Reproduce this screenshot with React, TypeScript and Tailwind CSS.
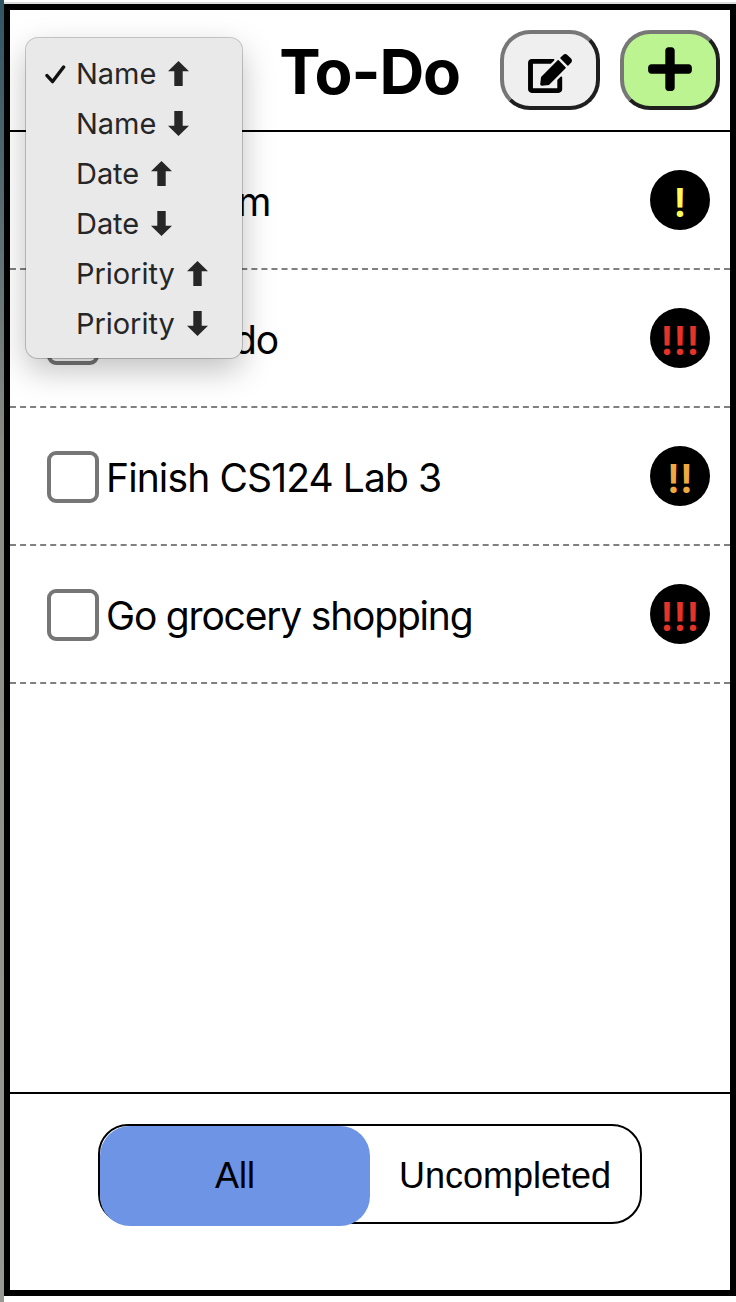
import { FaPlus, FaEdit } from "react-icons/fa";

type Task = { name: string; priority: 1 | 2 | 3; tracking: string };

const tasks: Task[] = [
  { name: "Call mom", priority: 1, tracking: "tracking-[-0.95px]" },
  { name: "Feed Fido", priority: 3, tracking: "tracking-[-1.05px]" },
  { name: "Finish CS124 Lab 3", priority: 2, tracking: "tracking-[-0.88px]" },
  { name: "Go grocery shopping", priority: 3, tracking: "tracking-[-1.2px]" },
];

const priorityColor = {
  1: "text-[#fffb54]",
  2: "text-[#f0a940]",
  3: "text-[#e63327]",
};

const sortOptions = [
  { label: "Name", up: true },
  { label: "Name", up: false },
  { label: "Date", up: true },
  { label: "Date", up: false },
  { label: "Priority", up: true },
  { label: "Priority", up: false },
];

function Arrow({ up }: { up: boolean }) {
  return (
    <svg
      viewBox="0 0 20 25"
      className={up ? "mb-[2px] ml-[12px] h-[25px] w-[21px]" : "mb-px ml-[12px] h-[25px] w-[21px] rotate-180"}
      fill="currentColor"
      preserveAspectRatio="none"
    >
      <path d="M10 0 20 10.3H14V25H6V10.3H0Z" />
    </svg>
  );
}

function SortMenu() {
  return (
    <div className="absolute top-[38px] left-[26px] h-[320px] w-[216px] rounded-[12px] bg-[#e9e9e9] pt-[11px] text-[#262626] shadow-[0_0_0_1px_rgba(0,0,0,0.2),0_12px_32px_rgba(0,0,0,0.25)]">
      {sortOptions.map((option, i) => (
        <div key={i} className="flex h-[50px] items-center pl-[19px]">
          <span className="flex w-[31px] shrink-0 items-center">
            {i === 0 && (
              <svg viewBox="0 0 21 19" className="h-[19px] w-[21px]" fill="none" stroke="#111" strokeWidth="3.4" strokeLinecap="round" strokeLinejoin="round">
                <path d="M2 10.6 7.6 16.6 18.6 2" />
              </svg>
            )}
          </span>
          <span className="text-[29px] leading-[50px] tracking-[-0.05px]">{option.label}</span>
          <Arrow up={option.up} />
        </div>
      ))}
    </div>
  );
}

export default function App() {
  return (
    <div className="relative flex h-[1302px] w-[736px] overflow-hidden bg-white font-['Inter','Liberation_Sans',sans-serif] text-black">
      <div className="w-[4px] shrink-0 bg-linear-to-b from-[#2f5563] via-[#8b8c84] via-35% to-[#979894]" />
      <div className="flex flex-1 flex-col">
        <div className="h-[4px] shrink-0 border-b-2 border-[#dcdcdc] bg-white" />
        <main className="flex h-[1292px] flex-col border-[6px] border-black bg-white">
          <header className="flex h-[122px] shrink-0 items-center justify-end gap-[20px] border-b-2 border-black pr-[10px]">
            <h1 className="mt-[4px] mr-[20px] text-[62px] leading-[80px] font-bold tracking-[-1.1px]">To-Do</h1>
            <button className="flex h-[80px] w-[100px] items-center justify-center rounded-[30px] border-4 border-t-[#777] border-r-[#1f1f1f] border-b-[#1f1f1f] border-l-[#777] bg-[#efefef]">
              <FaEdit className="mt-[6px] h-[39px] w-[44px]" />
            </button>
            <button className="flex h-[80px] w-[100px] items-center justify-center rounded-[30px] border-4 border-t-[#777] border-r-[#1f1f1f] border-b-[#1f1f1f] border-l-[#777] bg-[#bbf490]">
              <FaPlus className="mb-[2px] h-[50px] w-[44px]" />
            </button>
          </header>
          <ul className="flex-1">
            {tasks.map((task) => (
              <li key={task.name} className="flex h-[138px] items-center border-b-2 border-dashed border-[#808080] pr-[20px] pl-[37px]">
                <span className="mt-[2px] size-[52px] shrink-0 rounded-[9px] border-4 border-[#767676] bg-white" />
                <span className={`mt-[4px] ml-[7px] flex-1 text-[39px] leading-[50px] ${task.tracking}`}>{task.name}</span>
                <span className={`flex size-[60px] items-center justify-center rounded-full bg-black pt-[5px] text-[40px] leading-[55px] font-semibold tracking-[0.1px] ${priorityColor[task.priority]}`}>
                  {"!".repeat(task.priority)}
                </span>
              </li>
            ))}
          </ul>
          <footer className="flex h-[198px] shrink-0 justify-center border-t-2 border-black pt-[30px] font-['Liberation_Sans',sans-serif] text-[36px]">
            <div className="flex h-[100px] w-[544px] rounded-[30px] border-2 border-black">
              <button className="h-[100px] w-[270px] rounded-[30px] bg-[#6e94e5]">All</button>
              <button className="h-[100px] w-[270px]">Uncompleted</button>
            </div>
          </footer>
        </main>
      </div>
      <SortMenu />
    </div>
  );
}
